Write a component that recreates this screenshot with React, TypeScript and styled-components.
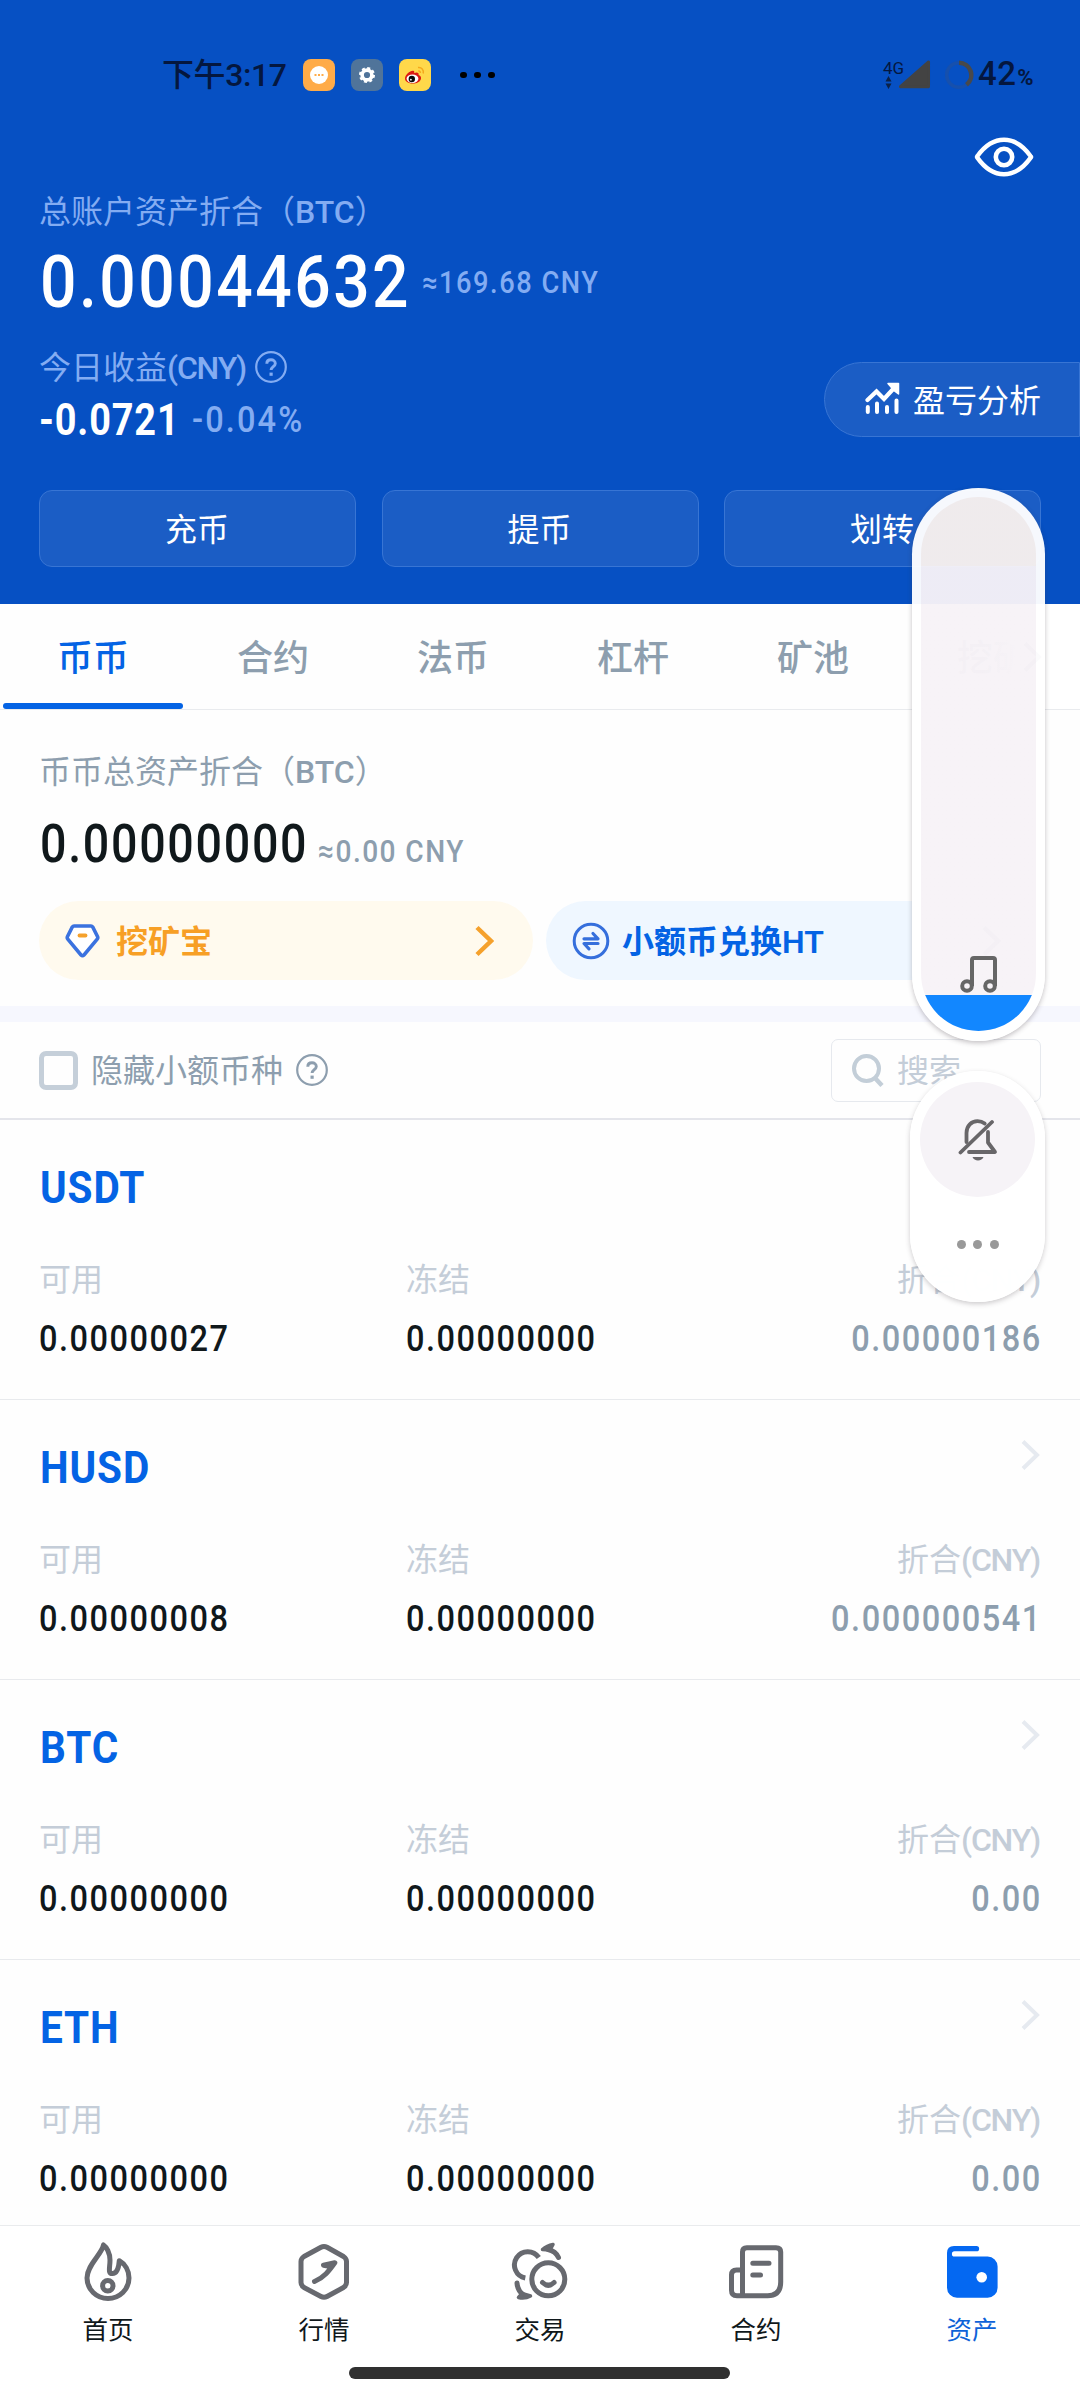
import React from "react";
import styled, { createGlobalStyle } from "styled-components";

const sans = `Roboto, "Noto Sans CJK SC", sans-serif`;

const color = {
  brand: "#0650c3",
  link: "#0463e4",
  pale: "#83acf2",
  slate: "#8d9eae",
  faint: "#c4cdd8",
  ink: "#10181b",
  nav: "#67696f",
};

const GlobalStyle = createGlobalStyle`
  * { box-sizing: border-box; }
  body { margin: 0; background: #fff; font-family: ${sans}; }
  svg { flex: none; }
`;

const Screen = styled.div`
  position: relative;
  display: flex;
  flex-direction: column;
  width: 1080px;
  height: 2400px;
  overflow: hidden;
  background: #fefefe;
`;

/* Text primitives */

const Label = styled.div<{ $color: string }>`
  height: 40px;
  font-size: 32px;
  line-height: 43px;
  color: ${(p) => p.$color};
  white-space: nowrap;
`;

const Latin = styled.span<{ $spacing?: number }>`
  font-weight: 500;
  letter-spacing: ${(p) => p.$spacing ?? 0}px;
`;

/* Condensed numerals: glyphs are squeezed and tracked out, so the
   layout width is given explicitly where something follows. */
const Figure = styled.span<{
  $size: number;
  $line: number;
  $color: string;
  $weight?: number;
  $spacing?: number;
  $stretch?: number;
  $width?: number;
  $end?: boolean;
}>`
  display: flex;
  justify-content: ${(p) => (p.$end ? "flex-end" : "flex-start")};
  width: ${(p) => (p.$width ? `${p.$width}px` : "auto")};
  margin-right: ${(p) => (p.$end ? -(p.$spacing ?? 0) : 0)}px;
  font-size: ${(p) => p.$size}px;
  line-height: ${(p) => p.$line}px;
  font-weight: ${(p) => p.$weight ?? 500};
  letter-spacing: ${(p) => p.$spacing ?? 0}px;
  color: ${(p) => p.$color};
  white-space: nowrap;
  transform: scaleX(${(p) => p.$stretch ?? 0.88});
  transform-origin: ${(p) => (p.$end ? "right" : "left")} center;
`;

/* Header */

const Header = styled.header`
  height: 604px;
  flex: none;
  padding: 30px 39px 0;
  background: ${color.brand};
`;

const StatusBar = styled.div`
  display: flex;
  align-items: center;
  height: 90px;
  padding: 0 7px 0 123px;
  color: #04173f;
`;

const Clock = styled.span`
  width: 141px;
  font-size: 32px;
  font-weight: 500;
  line-height: 42px;
  letter-spacing: -0.4px;
  white-space: nowrap;
`;

const AppBadge = styled.span<{ $bg: string }>`
  display: flex;
  width: 32px;
  height: 32px;
  margin-right: 16px;
  border-radius: 8px;
  background: ${(p) => p.$bg};
`;

const Overflow = styled.span`
  display: flex;
  gap: 7.5px;
  margin-left: 13px;
`;

const Dot = styled.i<{ $size: number; $color: string }>`
  width: ${(p) => p.$size}px;
  height: ${(p) => p.$size}px;
  border-radius: 50%;
  background: ${(p) => p.$color};
`;

const Signals = styled.span`
  display: flex;
  align-items: center;
  margin-left: auto;
`;

const Network = styled.span`
  display: flex;
  flex-direction: column;
  width: 15px;
  height: 30px;
  font-size: 17px;
  line-height: 16px;
  svg {
    margin-left: 2px;
  }
`;

const SignalSlot = styled.span`
  display: flex;
  margin-right: 12px;
`;

const Battery = styled.span`
  margin-left: 4px;
  font-size: 33px;
  font-weight: 500;
  line-height: 43px;
  letter-spacing: 0.4px;
  small {
    font-size: 22px;
    margin-left: 1px;
    font-weight: 700;
  }
`;

const EyeRow = styled.div`
  display: flex;
  align-items: center;
  justify-content: flex-end;
  height: 71px;
  padding: 2px 7px 0 0;
`;

const TotalRow = styled.div`
  display: flex;
  align-items: center;
  gap: 14px;
  height: 80px;
  margin-top: 11px;
  padding-left: 1px;
`;

const ProfitRow = styled.div`
  display: flex;
  justify-content: space-between;
  align-items: flex-start;
  height: 96px;
  margin: 25px -39px 47px 0;
`;

const ProfitLine = styled.div`
  display: flex;
  align-items: center;
  gap: 9px;
  height: 40px;
`;

const ProfitFigures = styled.div`
  display: flex;
  align-items: center;
  height: 46px;
  margin-top: 10px;
`;

const AnalysisPill = styled.button`
  display: flex;
  align-items: center;
  gap: 13px;
  width: 256px;
  height: 75px;
  margin: 15px 0 0;
  padding: 0 0 3px 40px;
  border: 1px solid #3875d4;
  border-radius: 38px 0 0 38px;
  background: #1b5dc5;
  color: #fff;
  font: 400 32px ${sans};
  white-space: nowrap;
`;

const Actions = styled.div`
  display: grid;
  grid-template-columns: repeat(3, 1fr);
  gap: 25.5px;
`;

const ActionButton = styled.button`
  height: 77px;
  padding: 0 1px 4px 0;
  border: 1px solid #3875d4;
  border-radius: 13px;
  background: #1b5dc5;
  color: #fff;
  font: 400 32px ${sans};
`;

/* Account tabs */

const Tabs = styled.nav`
  display: flex;
  flex: none;
  height: 106px;
  padding-left: 3px;
  border-bottom: 1px solid #e9ebee;
`;

const Tab = styled.a<{ $active?: boolean }>`
  display: flex;
  flex: none;
  flex-direction: column;
  justify-content: flex-end;
  align-items: center;
  width: 180px;
  color: ${(p) => (p.$active ? color.link : color.slate)};
  font-size: 36px;
  font-weight: 500;
  line-height: 48px;
  &::after {
    content: "";
    width: 100%;
    height: 6px;
    margin-top: 20px;
    border-radius: 3px;
    background: ${(p) => (p.$active ? color.link : "transparent")};
  }
`;

const TabMore = styled.span`
  display: flex;
  align-items: center;
  flex: none;
  width: 97px;
  margin-left: -100px;
  padding-left: 40px;
  background: linear-gradient(90deg, rgba(255, 255, 255, 0), #fff 40px);
`;

/* Account summary */

const Summary = styled.section`
  flex: none;
  height: 296px;
  padding: 41px 40px 0 39px;
`;

const SummaryFigures = styled.div`
  display: flex;
  align-items: baseline;
  gap: 13.5px;
  height: 60px;
  margin-top: 23px;
  padding-left: 0.5px;
`;

const Promos = styled.div`
  display: grid;
  grid-template-columns: 1fr 1fr;
  gap: 13px;
  margin-top: 27px;
`;

const Promo = styled.a<{ $bg: string; $fg: string }>`
  display: flex;
  align-items: center;
  height: 79px;
  padding: 0 39px 0 26px;
  border-radius: 40px;
  background: ${(p) => p.$bg};
  color: ${(p) => p.$fg};
  font-size: 32px;
  font-weight: 600;
`;

const PromoText = styled.span<{ $gap: number }>`
  flex: 1;
  margin-left: ${(p) => p.$gap}px;
  padding-top: 2px;
  line-height: 40px;
  white-space: nowrap;
`;

const Band = styled.div`
  flex: none;
  height: 16px;
  background: #f6f7fe;
`;

/* Filter */

const FilterBar = styled.div`
  display: flex;
  align-items: center;
  flex: none;
  height: 98px;
  padding: 0 39px;
  border-bottom: 2px solid #e4e5eb;
`;

const Checkbox = styled.span`
  width: 39px;
  height: 39px;
  margin-right: 13px;
  border: 5px solid #c5cfd9;
  border-radius: 7px;
`;

const FilterHelp = styled.span`
  display: flex;
  margin-left: 13px;
`;

const Search = styled.div`
  display: flex;
  align-items: center;
  gap: 13px;
  width: 210px;
  height: 63px;
  margin-left: auto;
  padding-left: 20px;
  border: 1px solid #e6e9ee;
  border-radius: 7px;
`;

/* Asset list */

const AssetList = styled.main`
  flex: 1;
  min-height: 0;
  overflow: hidden;
`;

const Asset = styled.article`
  height: 280px;
  padding: 39px 40px 0 39px;
  border-bottom: 1px solid #e8eaed;
`;

const AssetHead = styled.div`
  display: flex;
  justify-content: space-between;
  height: 54px;
  padding: 4px 0 0 0.5px;
`;

const ChevronSlot = styled.span`
  display: flex;
  margin-top: -4px;
`;

const AssetGrid = styled.div`
  display: grid;
  grid-template-columns: 367px 367px 1fr;
  row-gap: 17px;
  margin-top: 46px;
  > :nth-child(3n) {
    text-align: right;
  }
`;

/* Bottom navigation */

const BottomNav = styled.footer`
  flex: none;
  height: 175px;
  border-top: 1px solid #e9ebed;
  background: #fff;
`;

const NavItems = styled.div`
  display: grid;
  grid-template-columns: repeat(5, 1fr);
  padding-top: 14px;
`;

const NavItem = styled.a<{ $active?: boolean }>`
  display: flex;
  flex-direction: column;
  align-items: center;
  gap: 8px;
  color: ${(p) => (p.$active ? "#0e62d8" : color.ink)};
  font-size: 25.5px;
  line-height: 37px;
`;

const HomeBar = styled.div`
  width: 381px;
  height: 12px;
  margin: 18px 0 0 349px;
  border-radius: 6px;
  background: #303030;
`;

/* Volume overlay, floating over the page */

const VolumePanel = styled.aside`
  position: absolute;
  top: 488px;
  right: 35px;
  display: flex;
  flex-direction: column;
  align-items: flex-end;
  gap: 30px;
`;

const Slider = styled.div`
  width: 133px;
  height: 553px;
  padding: 9px;
  border-radius: 67px;
  background: rgba(255, 255, 255, 0.96);
  box-shadow: 0 2px 5px rgba(60, 50, 60, 0.3);
`;

const SliderTrack = styled.div`
  display: flex;
  flex-direction: column;
  justify-content: flex-end;
  align-items: center;
  height: 534px;
  overflow: hidden;
  border-radius: 58px;
  background: linear-gradient(
    rgba(219, 196, 188, 0.25) 69px,
    rgba(215, 200, 222, 0.25) 69px,
    rgba(215, 200, 222, 0.25) 107px,
    rgba(223, 207, 223, 0.25) 107px
  );
`;

const SliderFill = styled.div`
  width: 100%;
  height: 36px;
  margin-top: 2px;
  background: #1287ff;
`;

const SoundModes = styled.div`
  display: flex;
  flex-direction: column;
  align-items: center;
  width: 135px;
  height: 231px;
  padding-top: 11px;
  border-radius: 67px;
  background: rgba(255, 255, 255, 0.985);
  box-shadow: 0 2px 5px rgba(60, 50, 60, 0.25);
`;

const MuteButton = styled.div`
  display: flex;
  align-items: center;
  justify-content: center;
  width: 115px;
  height: 115px;
  padding-top: 1px;
  border-radius: 50%;
  background: #f6f3f7;
`;

const MoreDots = styled.div`
  display: flex;
  gap: 7.5px;
  margin-top: 42.5px;
`;

/* Icons */

const Chevron = ({ stroke, width = 4 }: { stroke: string; width?: number }) => (
  <svg width="19" height="32" viewBox="0 0 19 32" fill="none">
    <path d="M2 2.5 16 16 2 29.5" stroke={stroke} strokeWidth={width} />
  </svg>
);

const HelpIcon = ({ stroke }: { stroke: string }) => (
  <svg width="32" height="32" viewBox="0 0 32 32" fill="none" stroke={stroke}>
    <circle cx="16" cy="16" r="14.8" strokeWidth="2.2" />
    <path
      d="M11.8 12.8C11.8 10.2 13.6 8.8 16 8.8s4.3 1.4 4.3 3.7c0 3-4.2 3.3-4.2 6.6"
      strokeWidth="2.9"
    />
    <path d="M16.1 21.6v3.2" strokeWidth="3.2" />
  </svg>
);

const EyeIcon = () => (
  <svg width="60" height="40" viewBox="0 0 60 40" fill="none" stroke="#fff">
    <path
      d="M3.5 20.9C2.6 20 2.6 20 3.5 19 10 10 19 2.8 30 2.8S50 10 56.5 19c.9.9.9 1 0 1.900C50 30 41 37.200 30 37.200S10 30 3.500 20.900Z"
      strokeWidth="4.4"
    />
    <circle cx="30" cy="20" r="8.200" strokeWidth="4.600" />
  </svg>
);

const ChatBadge = () => (
  <svg width="32" height="32" viewBox="0 0 32 32">
    <circle cx="16" cy="16" r="9" fill="#fff" />
    <path d="M11.500 14.900h2v2h-2zM15 14.900h2v2h-2zM18.500 14.900h2v2h-2z" fill="#ffab48" />
  </svg>
);

const GearBadge = () => (
  <svg width="32" height="32" viewBox="0 0 32 32" fill="none" stroke="#fff">
    <circle cx="16" cy="16" r="4.900" strokeWidth="3.600" />
    <circle cx="16" cy="16" r="7" strokeWidth="2" strokeDasharray="3 2.500" />
  </svg>
);

const WeiboBadge = () => (
  <svg width="32" height="32" viewBox="0 0 32 32" fill="none">
    <path
      d="M6 19.500c0-4 5.500-8.500 8.500-7.800 1 .3.900 1.600.6 2.300 2.500-1 5.200-.6 4.500 2 1.600.5 2.600 1.600 2.400 3.400-.5 3.500-4.500 5.100-8.200 5.100S6 22.800 6 19.500Z"
      fill="#dc1a12"
    />
    <ellipse cx="13.500" cy="19.800" rx="5.900" ry="4.200" fill="#fff" />
    <circle cx="12.800" cy="20" r="3.200" fill="#0b0b0b" />
    <circle cx="11.900" cy="20.700" r=".9" fill="#fff" />
    <path d="M19 8.500c3.600-.5 6 2.200 5.200 6M19.300 12c1.500-.2 2.200.6 2 2" stroke="#f4a91d" strokeWidth="1.500" />
  </svg>
);

const DataArrows = () => (
  <svg width="7" height="13" viewBox="0 0 7 13" fill="#0b2147">
    <path d="M3.500 0 6.500 5.500h-6zM3.500 13l-3-5.500h6z" />
  </svg>
);

const SignalIcon = () => (
  <svg width="34" height="30" viewBox="0 0 34 30">
    <path d="M2.500 27.500 31.500 2v25.500Z" fill="#434343" stroke="#434343" strokeWidth="3" strokeLinejoin="round" transform="scale(.97)" />
  </svg>
);

const BatteryRing = () => (
  <svg width="30" height="30" viewBox="0 0 30 30" fill="none" strokeWidth="4.500">
    <circle cx="15" cy="15" r="12.300" stroke="#1650ad" strokeWidth="3.500" />
    <path d="M15 2.700a12.300 12.300 0 0 1 7.500 22" stroke="#48494b" />
  </svg>
);

const AnalysisIcon = () => (
  <svg width="35" height="33" viewBox="0 0 35 33" fill="none" stroke="#fff">
    <path d="M2.500 18 11.500 9.500 19 17 30 5" strokeWidth="4.200" strokeLinecap="round" />
    <path d="M23 1.500h10.500V12l-4-3Z" fill="#fff" strokeWidth="1.500" strokeLinejoin="round" />
    <path d="M2.800 25v5M12 21.500V30M22 25v5M31.500 18.500V30" strokeWidth="4" strokeLinecap="round" />
  </svg>
);

const DiamondIcon = () => (
  <svg width="35" height="34" viewBox="0 0 35 34" fill="none">
    <path
      d="M9 2h17q1 0 1.700 1L32.500 12.500q.7 1.500-.3 2.700L19 31q-1.500 1.500-3 0L2.800 15.200q-1-1.200-.3-2.700L7.300 3Q8 2 9 2Z"
      fill="#fff"
      stroke="#3b72df"
      strokeWidth="3.600"
    />
    <path d="M14.500 11.500h6" stroke="#f5a12c" strokeWidth="3.800" strokeLinecap="round" />
  </svg>
);

const SwapIcon = () => (
  <svg width="38" height="38" viewBox="0 0 38 38" fill="none" stroke="#356fdc" strokeLinecap="round" strokeLinejoin="round">
    <circle cx="19" cy="19" r="16.800" strokeWidth="3" />
    <path d="M12 16.800h14L21 11.500M26 21.500H12l5 5.300" strokeWidth="3.200" />
  </svg>
);

const SearchIcon = () => (
  <svg width="32" height="33" viewBox="0 0 32 33" fill="none" stroke="#c3ced8" strokeWidth="4">
    <circle cx="14.500" cy="14.500" r="12.500" />
    <path d="m22.500 23.500 7.500 8" strokeWidth="4.500" />
  </svg>
);

const MusicIcon = () => (
  <svg width="38" height="37" viewBox="0 0 38 37" fill="none" stroke="#666" strokeWidth="4">
    <path d="M12 30V4q0-2 2-2h19q2 0 2 2v26" />
    <circle cx="7" cy="30" r="4.800" />
    <circle cx="30" cy="30" r="4.800" />
  </svg>
);

const BellOffIcon = () => (
  <svg width="40" height="43" viewBox="0 0 40 43" fill="none" stroke="#686669" strokeWidth="3.800" strokeLinecap="round" strokeLinejoin="round">
    <path d="M8.500 23V14C8.500 6.500 13.500 2.200 19.500 2.200c3 0 5 .6 7.200 2.300" />
    <path d="M34 3 2.500 33.500" />
    <path d="M30 13v10.500l7 9.500H11" />
    <path d="M14.500 38h11c-1.500 4.500-9.500 4.500-11 0Z" fill="#686669" stroke="none" />
  </svg>
);

const NavSvg = ({ children }: { children: React.ReactNode }) => (
  <svg width="60" height="64" viewBox="0 0 60 64" fill="none" stroke={color.nav} strokeWidth="5" strokeLinecap="round" strokeLinejoin="round">
    {children}
  </svg>
);

const FlameIcon = () => (
  <NavSvg>
    <path d="M25.500 5C24 14 9 25 9 38a21 20.500 0 0 0 42 0C51 30.500 47 24 41.300 20.800 40.800 27 39 33.500 34.500 33.500 29.500 33.500 32 28 32 20 32 13 28.500 7 25.500 5Z" />
    <circle cx="29.800" cy="45.800" r="5.200" />
  </NavSvg>
);

const MarketIcon = () => (
  <NavSvg>
    <path d="M27 7.200q3-1.600 6 0L49.500 16.500q3 2 3 5v21q0 3-3 5L33 56.500q-3 1.600-6 0L10 47.500q-3-2-3-5v-21q0-3 3-5Z" />
    <path d="M20.500 41.500C30 37.500 35 31 40.800 22.800L29.500 25.300l7 1.200" />
  </NavSvg>
);

const TradeIcon = () => (
  <NavSvg>
    <circle cx="38.300" cy="39.300" r="16.500" />
    <path d="M32.500 42.500q5.800 5.500 11.600 0" />
    <path d="M28.800 17.500a13.300 13.300 0 1 0-13.500 20.500" strokeLinecap="butt" />
    <path d="M48.500 17.500C46.500 13 43 10.500 38 9.500" />
    <path d="M32.500 9.500Q37 5.500 43 4.500L40 10Z" fill={color.nav} strokeWidth="3.500" />
    <path d="M7 43q.5 7.500 6 11.500" />
    <path d="M8.500 57.500Q15 59 20.500 56L12 53.500Z" fill={color.nav} strokeWidth="3.500" />
  </NavSvg>
);

const ContractIcon = () => (
  <NavSvg>
    <path d="M16.500 55.700V12q0-4.300 4.300-4.300H50q4.700 0 4.700 4.300v30q0 13.700-13 13.700H11q-5.500 0-5.500-5.500V35q0-5 5-5h6" />
    <path d="M26.800 23.300h16.200M26.800 35h7.700" />
  </NavSvg>
);

const WalletIcon = () => (
  <NavSvg>
    <path
      d="M12 6H34.500a2.600 2.600 0 0 1 0 5.300H12.500a2.500 2.500 0 0 0 0 5.200H45.600a10 10 0 0 1 10 10v21.200a10 10 0 0 1-10 10H15a10 10 0 0 1-10-10V13Q5 6 12 6Z"
      fill="#0468f2"
      stroke="none"
    />
    <circle cx="39.700" cy="37.300" r="5.300" fill="#fff" stroke="none" />
  </NavSvg>
);

/* Data */

const tabs = ["币币", "合约", "法币", "杠杆", "矿池", "挖矿"];

const assets = [
  { symbol: "USDT", free: "0.00000027", frozen: "0.00000000", worth: "0.00000186" },
  { symbol: "HUSD", free: "0.00000008", frozen: "0.00000000", worth: "0.000000541" },
  { symbol: "BTC", free: "0.00000000", frozen: "0.00000000", worth: "0.00" },
  { symbol: "ETH", free: "0.00000000", frozen: "0.00000000", worth: "0.00" },
];

const navItems = [
  { label: "首页", icon: <FlameIcon /> },
  { label: "行情", icon: <MarketIcon /> },
  { label: "交易", icon: <TradeIcon /> },
  { label: "合约", icon: <ContractIcon /> },
  { label: "资产", icon: <WalletIcon />, active: true },
];

const AssetCell = ({ value, tone, end }: { value: string; tone: string; end?: boolean }) => (
  <Figure $size={37} $line={46} $color={tone} $spacing={1.7} $end={end}>
    {value}
  </Figure>
);

export default function App() {
  return (
    <Screen>
      <GlobalStyle />
      <Header>
        <StatusBar>
          <Clock>下午3:17</Clock>
          <AppBadge $bg="#ffab48">
            <ChatBadge />
          </AppBadge>
          <AppBadge $bg="#50749a">
            <GearBadge />
          </AppBadge>
          <AppBadge $bg="#ffd84a">
            <WeiboBadge />
          </AppBadge>
          <Overflow>
            <Dot $size={6.5} $color="#000" />
            <Dot $size={6.5} $color="#000" />
            <Dot $size={6.5} $color="#000" />
          </Overflow>
          <Signals>
            <Network>
              4G
              <DataArrows />
            </Network>
            <SignalSlot>
              <SignalIcon />
            </SignalSlot>
            <BatteryRing />
            <Battery>
              42<small>%</small>
            </Battery>
          </Signals>
        </StatusBar>
        <EyeRow>
          <EyeIcon />
        </EyeRow>
        <Label $color={color.pale}>
          总账户资产折合（<Latin>BTC</Latin>）
        </Label>
        <TotalRow>
          <Figure $size={73} $line={80} $color="#fff" $spacing={2.8} $width={368}>
            0.00044632
          </Figure>
          <Figure $size={31} $line={43} $color={color.pale} $spacing={1.7}>
            ≈169.68 CNY
          </Figure>
        </TotalRow>
        <ProfitRow>
          <div>
            <ProfitLine>
              <Label $color={color.pale}>
                今日收益<Latin $spacing={-1.2}>(CNY)</Latin>
              </Label>
              <HelpIcon stroke={color.pale} />
            </ProfitLine>
            <ProfitFigures>
              <Figure $size={44} $line={46} $color="#fff" $weight={700} $stretch={0.86} $spacing={1} $width={153}>
                -0.0721
              </Figure>
              <Figure $size={37} $line={48} $color={color.pale} $spacing={2.4}>
                -0.04%
              </Figure>
            </ProfitFigures>
          </div>
          <AnalysisPill>
            <AnalysisIcon />
            盈亏分析
          </AnalysisPill>
        </ProfitRow>
        <Actions>
          <ActionButton>充币</ActionButton>
          <ActionButton>提币</ActionButton>
          <ActionButton>划转</ActionButton>
        </Actions>
      </Header>

      <Tabs>
        {tabs.map((name, i) => (
          <Tab key={name} $active={i === 0}>
            {name}
          </Tab>
        ))}
        <TabMore>
          <Chevron stroke={color.slate} />
        </TabMore>
      </Tabs>

      <Summary>
        <Label $color={color.slate}>
          币币总资产折合（<Latin>BTC</Latin>）
        </Label>
        <SummaryFigures>
          <Figure $size={53} $line={60} $color={color.ink} $spacing={1.9} $width={265}>
            0.00000000
          </Figure>
          <Figure $size={32} $line={40} $color={color.slate} $spacing={1.6}>
            ≈0.00 CNY
          </Figure>
        </SummaryFigures>
        <Promos>
          <Promo $bg="#fffaee" $fg="#f79f25">
            <DiamondIcon />
            <PromoText $gap={16}>挖矿宝</PromoText>
            <Chevron stroke="#f5a12c" width={4.5} />
          </Promo>
          <Promo $bg="#eff7ff" $fg={color.link}>
            <SwapIcon />
            <PromoText $gap={12}>小额币兑换HT</PromoText>
            <Chevron stroke={color.slate} width={4.5} />
          </Promo>
        </Promos>
      </Summary>

      <Band />

      <FilterBar>
        <Checkbox />
        <Label $color={color.slate}>隐藏小额币种</Label>
        <FilterHelp>
          <HelpIcon stroke={color.slate} />
        </FilterHelp>
        <Search>
          <SearchIcon />
          <Label $color={color.faint}>搜索</Label>
        </Search>
      </FilterBar>

      <AssetList>
        {assets.map((a) => (
          <Asset key={a.symbol}>
            <AssetHead>
              <Figure $size={44} $line={51} $color={color.link} $weight={700} $stretch={0.92} $spacing={1}>
                {a.symbol}
              </Figure>
              <ChevronSlot>
                <Chevron stroke="#e6eaf0" />
              </ChevronSlot>
            </AssetHead>
            <AssetGrid>
              <Label $color={color.faint}>可用</Label>
              <Label $color={color.faint}>冻结</Label>
              <Label $color={color.faint}>
                折合<Latin $spacing={-1.2}>(CNY)</Latin>
              </Label>
              <AssetCell value={a.free} tone={color.ink} />
              <AssetCell value={a.frozen} tone={color.ink} />
              <AssetCell value={a.worth} tone={color.slate} end />
            </AssetGrid>
          </Asset>
        ))}
      </AssetList>

      <BottomNav>
        <NavItems>
          {navItems.map((n) => (
            <NavItem key={n.label} $active={n.active}>
              {n.icon}
              {n.label}
            </NavItem>
          ))}
        </NavItems>
        <HomeBar />
      </BottomNav>

      <VolumePanel>
        <Slider>
          <SliderTrack>
            <MusicIcon />
            <SliderFill />
          </SliderTrack>
        </Slider>
        <SoundModes>
          <MuteButton>
            <BellOffIcon />
          </MuteButton>
          <MoreDots>
            <Dot $size={9} $color="#999" />
            <Dot $size={9} $color="#999" />
            <Dot $size={9} $color="#999" />
          </MoreDots>
        </SoundModes>
      </VolumePanel>
    </Screen>
  );
}
